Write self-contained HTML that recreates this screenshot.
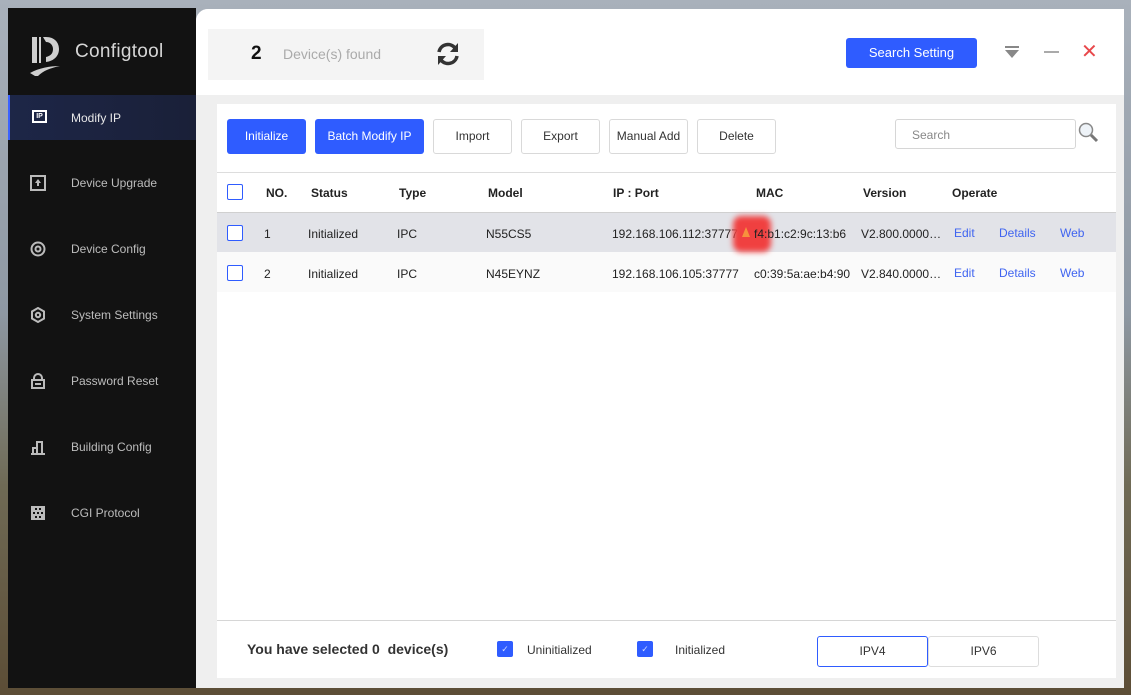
<!DOCTYPE html>
<html><head><style>
*{margin:0;padding:0;box-sizing:border-box}
body{width:1131px;height:695px;overflow:hidden;font-family:"Liberation Sans",sans-serif;font-size:12px;color:#222;position:relative;background:linear-gradient(180deg,#a9b1bb 0%,#8e98a3 45%,#6f6a55 70%,#5c4d36 100%)}
.abs{position:absolute}
.side{left:8px;top:8px;width:188px;height:680px;background:#121212}
.nav{position:absolute;left:0;width:188px;height:44px;color:#bdbdbd;font-size:12px}
.nav span{position:absolute;left:63px;top:15px}
.nav svg{position:absolute;left:22px;top:14px}
.main{left:196px;top:9px;width:928px;height:679px;background:#f6f7f9;border-top-left-radius:12px;overflow:hidden}
.btn{position:absolute;top:119px;height:35px;border-radius:3px;font-size:12px;text-align:center;line-height:35px}
.pb{background:#2f5cff;color:#fff}
.wb{background:#fff;border:1px solid #d9d9d9;color:#333;line-height:33px}
.th{position:absolute;top:186px;font-weight:bold;font-size:12px}
.cell{position:absolute;font-size:12px}
.cb{position:absolute;width:16px;height:16px;border:1.5px solid #2f5cff;border-radius:2px;background:#fff}
.lnk{color:#3f64f0}
</style></head><body>
<div class="abs side">
 <svg class="abs" style="left:20px;top:27px" width="40" height="42" viewBox="0 0 40 42"><path d="M4 2h5v26H4zM11 2h2v26h-2zM15 2h3c9 0 13 6 13 12 0 7-5 12-13 13v-5c4-1 7-3 7-8 0-4-3-7-7-7z" fill="#cfcfcf"/><path d="M2 38c9-5 20-7 30-7-10 2-17 5-22 10h-3z" fill="#cfcfcf"/></svg>
 <div class="abs" style="left:67px;top:33px;color:#d6d6d6;font-size:19px;letter-spacing:.3px">Configtool</div>
 <div class="nav" style="top:87px;background:linear-gradient(90deg,#1d2647,#1a2038);border-left:2px solid #3b62ff;height:45px;color:#e8e8e8"><div class="abs" style="left:22px;top:15px;border:2px solid #fff;width:15px;height:13px;font-size:7px;color:#fff;font-weight:bold;text-align:center;line-height:9px">IP</div><span style="left:61px;top:16px">Modify IP</span></div>
 <div class="nav" style="top:153px"><svg width="16" height="16"><rect x="1" y="1" width="14" height="14" fill="none" stroke="#bbb" stroke-width="2"/><path d="M8 4l-3 4h2v3h2V8h2z" fill="#bbb"/></svg><span>Device Upgrade</span></div>
 <div class="nav" style="top:219px"><svg width="16" height="16"><circle cx="8" cy="8" r="6.5" fill="none" stroke="#bbb" stroke-width="2"/><circle cx="8" cy="8" r="2.5" fill="none" stroke="#bbb" stroke-width="2"/></svg><span>Device Config</span></div>
 <div class="nav" style="top:285px"><svg width="16" height="16"><path d="M8 1l6 3.5v7L8 15l-6-3.5v-7z" fill="none" stroke="#bbb" stroke-width="2"/><circle cx="8" cy="8" r="2.2" fill="none" stroke="#bbb" stroke-width="2"/></svg><span>System Settings</span></div>
 <div class="nav" style="top:351px"><svg width="16" height="16"><path d="M4 7V5a4 4 0 0 1 8 0v2" fill="none" stroke="#bbb" stroke-width="2"/><rect x="2" y="7" width="12" height="8" fill="none" stroke="#bbb" stroke-width="2"/><rect x="5" y="10" width="6" height="2" fill="#bbb"/></svg><span>Password Reset</span></div>
 <div class="nav" style="top:417px"><svg width="16" height="16"><path d="M1 15h14M3 15V9h4v6M7 15V3h5v12" fill="none" stroke="#bbb" stroke-width="2"/></svg><span>Building Config</span></div>
 <div class="nav" style="top:483px"><svg width="16" height="16"><rect x="1" y="1" width="14" height="14" fill="#bbb"/><path d="M5 3h2v2H5zM9 3h2v2H9zM3 7h2v2H3zM7 7h2v2H7zM11 7h2v2h-2zM5 11h2v2H5zM9 11h2v2H9z" fill="#121212"/></svg><span>CGI Protocol</span></div>
</div>
<div class="abs main">
 <div class="abs" style="left:0;top:0;width:928px;height:86px;background:#fff"></div>
 <div class="abs" style="left:12px;top:20px;width:276px;height:51px;background:#f4f4f4"></div>
 <div class="abs" style="left:55px;top:34px;font-size:19px;font-weight:bold;color:#111">2</div>
 <div class="abs" style="left:87px;top:37px;font-size:14px;color:#aaa">Device(s) found</div>
 <svg class="abs" style="left:239px;top:32px" width="26" height="26" viewBox="0 0 26 26"><path d="M4 11a9 9 0 0 1 16-4" stroke="#333" stroke-width="3.5" fill="none"/><path d="M22 15a9 9 0 0 1-16 4" stroke="#333" stroke-width="3.5" fill="none"/><path d="M23 2v9h-8z M3 24v-9h8z" fill="#333"/></svg>
 <div class="abs" style="left:650px;top:29px;width:131px;height:30px;background:#2f5cff;border-radius:3px;color:#fff;font-size:13px;text-align:center;line-height:30px">Search Setting</div>
 <svg class="abs" style="left:808px;top:37px" width="16" height="14"><rect x="1" y="0" width="14" height="2" fill="#888"/><path d="M1 4h14l-7 8z" fill="#888"/></svg>
 <div class="abs" style="left:848px;top:42px;width:15px;height:2px;background:#aaa"></div>
 <div class="abs" style="left:885px;top:30px;color:#e8484b;font-size:20px">✕</div>
 <div class="abs" style="left:0;top:86px;width:928px;height:593px;background:#efefef"></div>
 <div class="abs" style="left:21px;top:95px;width:899px;height:574px;background:#fff"></div>
</div>
<div class="btn pb" style="left:227px;width:79px">Initialize</div>
<div class="btn pb" style="left:315px;width:109px">Batch Modify IP</div>
<div class="btn wb" style="left:433px;width:79px">Import</div>
<div class="btn wb" style="left:521px;width:79px">Export</div>
<div class="btn wb" style="left:609px;width:79px">Manual Add</div>
<div class="btn wb" style="left:697px;width:79px">Delete</div>
<div class="abs" style="left:895px;top:119px;width:181px;height:30px;border:1px solid #d6d6d6;border-radius:3px;color:#888;font-size:12px;padding:8px 0 0 16px">Search</div>
<svg class="abs" style="left:1078px;top:122px" width="22" height="22"><circle cx="8" cy="8" r="6.5" stroke="#888" stroke-width="1.5" fill="#eef3f8"/><path d="M13 13l6 6" stroke="#777" stroke-width="3"/></svg>
<div class="abs" style="left:217px;top:172px;width:899px;height:1px;background:#ddd"></div>
<div class="abs" style="left:217px;top:212px;width:899px;height:40px;background:#e2e3e8;border-top:1px solid #d0d0d0"></div>
<div class="abs" style="left:217px;top:252px;width:899px;height:40px;background:#fafafa"></div>
<div class="cb" style="left:227px;top:184px"></div>
<div class="th" style="left:266px">NO.</div><div class="th" style="left:311px">Status</div><div class="th" style="left:399px">Type</div><div class="th" style="left:488px">Model</div><div class="th" style="left:613px">IP : Port</div><div class="th" style="left:756px">MAC</div><div class="th" style="left:863px">Version</div><div class="th" style="left:952px">Operate</div>
<div class="cb" style="left:227px;top:225px"></div>
<div class="cell" style="top:227px;left:264px">1</div><div class="cell" style="top:227px;left:308px">Initialized</div><div class="cell" style="top:227px;left:397px">IPC</div><div class="cell" style="top:227px;left:486px">N55CS5</div><div class="cell" style="top:227px;left:612px">192.168.106.112:37777</div>
<div class="abs" style="left:733px;top:216px;width:38px;height:36px;background:#f04040;border-radius:8px;filter:blur(3px)"></div>
<div class="abs" style="left:742px;top:227px;width:0;height:0;border-left:4px solid transparent;border-right:4px solid transparent;border-bottom:10px solid #f7913d"></div>
<div class="cell" style="top:227px;left:754px">f4:b1:c2:9c:13:b6</div><div class="cell" style="top:227px;left:861px">V2.800.0000…</div>
<div class="cell lnk" style="top:226px;left:954px">Edit</div><div class="cell lnk" style="top:226px;left:999px">Details</div><div class="cell lnk" style="top:226px;left:1060px">Web</div>
<div class="cb" style="left:227px;top:265px"></div>
<div class="cell" style="top:267px;left:264px">2</div><div class="cell" style="top:267px;left:308px">Initialized</div><div class="cell" style="top:267px;left:397px">IPC</div><div class="cell" style="top:267px;left:486px">N45EYNZ</div><div class="cell" style="top:267px;left:612px">192.168.106.105:37777</div>
<div class="cell" style="top:267px;left:754px">c0:39:5a:ae:b4:90</div><div class="cell" style="top:267px;left:861px">V2.840.0000…</div>
<div class="cell lnk" style="top:266px;left:954px">Edit</div><div class="cell lnk" style="top:266px;left:999px">Details</div><div class="cell lnk" style="top:266px;left:1060px">Web</div>
<div class="abs" style="left:217px;top:620px;width:899px;height:1px;background:#d6d6d6"></div>
<div class="abs" style="left:247px;top:641px;font-size:14px;font-weight:bold;color:#333">You have selected 0&nbsp; device(s)</div>
<div class="abs" style="left:497px;top:641px;width:16px;height:16px;background:#2f5cff;border-radius:2px;color:#cfd8ff;font-size:9px;text-align:center;line-height:16px">✓</div>
<div class="abs" style="left:527px;top:643px;color:#333">Uninitialized</div>
<div class="abs" style="left:637px;top:641px;width:16px;height:16px;background:#2f5cff;border-radius:2px;color:#cfd8ff;font-size:9px;text-align:center;line-height:16px">✓</div>
<div class="abs" style="left:675px;top:643px;color:#333">Initialized</div>
<div class="abs" style="left:817px;top:636px;width:111px;height:31px;border:1px solid #2f5cff;border-radius:3px;text-align:center;line-height:29px;color:#333">IPV4</div>
<div class="abs" style="left:928px;top:636px;width:111px;height:31px;border:1px solid #ddd;border-radius:3px;text-align:center;line-height:29px;color:#333">IPV6</div>
</body></html>
